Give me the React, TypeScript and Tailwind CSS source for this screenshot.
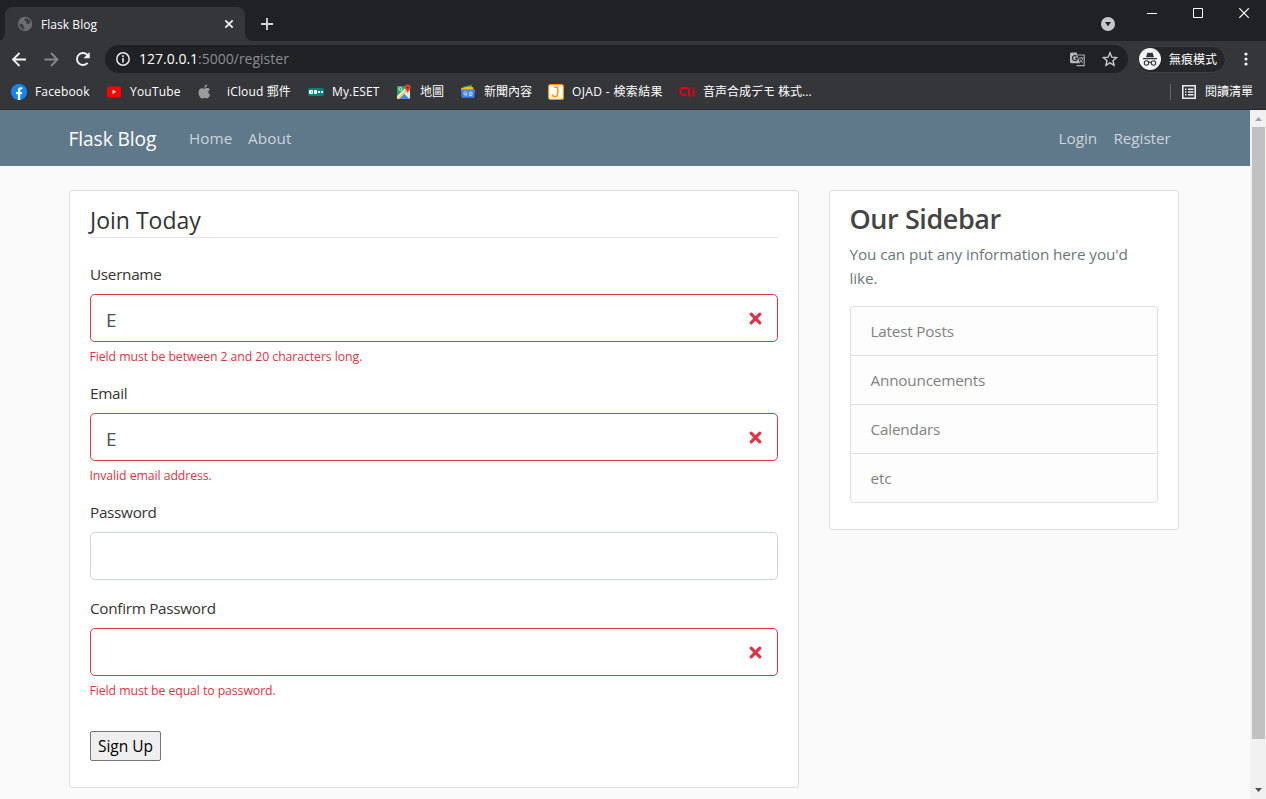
import React from "react";

type Bookmark = { label: string; icon: React.ReactNode; box: string; track: string };

const FacebookIcon = () => (
  <svg width="16" height="16" viewBox="0 0 16 16">
    <circle cx="8" cy="8" r="8" fill="#1087f2" />
    <path d="M6.9 16V10.3H5V8h1.9V6.4c0-2 1.1-3.1 2.9-3.1.8 0 1.5.1 1.5.1v1.9h-.9c-.9 0-1.2.6-1.2 1.1V8h2l-.4 2.3H9.2V16z" fill="#fff" />
  </svg>
);

const YouTubeIcon = () => (
  <svg width="16" height="16" viewBox="0 0 16 16">
    <rect x="0" y="2.5" width="14" height="11" rx="2" fill="#f00" />
    <path d="M5.500 5.700v4.200L9.200 7.800z" fill="#fff" />
  </svg>
);

const AppleIcon = () => (
  <svg width="16" height="16" viewBox="0 0 16 16">
    <path d="M10.200.6c.1 1.700-1.300 3.200-2.800 3.200C7.200 2.200 8.700.8 10.200.6zM7.500 4.800c.6 0 1.500-.8 2.800-.7.9 0 1.900.5 2.500 1.300-2.100 1.300-1.800 4.200.4 5.200-.6 1.900-1.900 3.900-3.200 4-.9 0-1.300-.6-2.400-.6s-1.500.6-2.400.6C3.400 14.600 1.500 11.400 1.500 8.600c0-2.900 1.700-4.400 3.400-4.400 1.200 0 1.900.6 2.600.6z" fill="#9b9b9b" />
  </svg>
);

const EsetIcon = () => (
  <svg width="16" height="16" viewBox="0 0 16 16">
    <rect x="0" y="4" width="16" height="8" rx="2" fill="#00837b" />
    <rect x="1" y="6" width="4" height="4" rx="1" fill="#fff" />
    <rect x="3" y="7.500" width="1" height="1" fill="#00837b" />
    <rect x="6" y="6" width="3" height="4" rx=".8" fill="#fff" />
    <rect x="10" y="7" width="2" height="2" fill="#fff" />
    <rect x="13" y="7" width="2" height="2" fill="#fff" />
  </svg>
);

const MapsIcon = () => (
  <svg width="16" height="16" viewBox="0 0 16 16">
    <rect x="1" y="2" width="13" height="13" rx="1.5" fill="#e8e8e8" />
    <path d="M1 3.500A1.500 1.500 0 0 1 2.500 2H11L1 12z" fill="#1fa463" />
    <path d="M2.500 15 8 9.500 13.500 15z" fill="#4a86f7" />
    <path d="M1 14.500 9.500 6l1.300 1.300L3 15z" fill="#fdd34a" />
    <circle cx="4.3" cy="5" r="1.5" fill="none" stroke="#fff" strokeWidth=".8" />
    <path d="M11.700 9.500C11.400 7 8.700 6 8.700 3.600a3 3 0 0 1 6 0c0 2.400-2.700 3.400-3 5.900z" fill="#ea4335" />
    <circle cx="11.7" cy="3.6" r="1.1" fill="#8c1d18" />
  </svg>
);

const NewsIcon = () => (
  <svg width="16" height="16" viewBox="0 0 16 16">
    <path d="M3.500 2.500 12 .8v4H3.500z" fill="#1fa463" />
    <path d="m8 2.200 6 1.300-.8 4H8z" fill="#ea4335" />
    <path d="m1 4 8.500-1.500 3.500 1V8H2z" fill="#fbbc04" />
    <path d="M1 5.500h14l-.8 8.300H1.800z" fill="#4385f5" />
    <path d="M6.900 8.200a1.700 1.700 0 1 0 .4 1.500H5.700M9 8.200h3.200M9 9.800h3.700M9 11.400h3.200" fill="none" stroke="#dce8ff" strokeWidth=".9" />
  </svg>
);

const OjadIcon = () => (
  <svg width="16" height="16" viewBox="0 0 16 16">
    <rect x=".6" y=".6" width="14.8" height="14.8" rx="2" fill="#fff" stroke="#ff9800" strokeWidth="1.2" />
    <path d="M6 3.200h4.500M9.700 3.200v6.600c0 2-1 2.900-2.700 2.900-1.500 0-2.500-.8-2.700-2.300" fill="none" stroke="#ff9800" strokeWidth="1.6" />
  </svg>
);

const AiIcon = () => (
  <svg width="16" height="16" viewBox="0 0 16 16" fill="none" stroke="#e60012" strokeWidth="2">
    <path d="M7.500 11H4.800C2.700 11 1.300 9.800 1.300 7.500S2.700 3.900 4.800 3.900h2.400c1.800 0 2.800.8 2.800 2.600v3.600c0 1.400.6 2 1.800 2M14.500 6.500v6M14.500 3.300v1.900" />
  </svg>
);

const bookmarks: Bookmark[] = [
  { label: "Facebook", icon: <FacebookIcon />, box: "w-[96px]", track: "tracking-[0.15px]" },
  { label: "YouTube", icon: <YouTubeIcon />, box: "w-[90px]", track: "ml-[-1px] tracking-[0.2px]" },
  { label: "iCloud 郵件", icon: <AppleIcon />, box: "w-[111px]", track: "ml-[6px] tracking-[0.15px]" },
  { label: "My.ESET", icon: <EsetIcon />, box: "w-[88px]", track: "tracking-[0.15px]" },
  { label: "地圖", icon: <MapsIcon />, box: "w-[64px]", track: "" },
  { label: "新聞內容", icon: <NewsIcon />, box: "w-[88px]", track: "" },
  { label: "OJAD - 検索結果", icon: <OjadIcon />, box: "w-[131px]", track: "tracking-[0.36px]" },
  { label: "音声合成デモ 株式...", icon: <AiIcon />, box: "w-[140px]", track: "" },
];

function TabStrip() {
  return (
    <div className="flex h-[41px] bg-[#202124]">
      <svg width="8" height="8" className="-ml-[3px] self-end"><path d="M8 0v8H0a8 8 0 0 0 8-8z" fill="#35363a" /></svg>
      <div className="mt-[7px] flex w-[240px] items-center rounded-t-lg bg-[#35363a] pl-3 pr-[11px]">
        <svg width="16" height="16" viewBox="0 0 16 16">
          <circle cx="8" cy="8" r="7.2" fill="#6b6e72" />
          <path d="M2.200 7.500c1.800.3 3.400.5 4.500 1.700.3 1.300-.3 1.700.7 2.100v2.500A6 6 0 0 1 2.200 7.500zM8.500 2c2.800.3 4.800 2 5.300 4.600-.9 1-2.400.7-2.600 1.700-.8-.3-2.100-.3-2.400-1.700 1.300-.3 1-1.700-.4-1.300C7 5 7.300 3.500 8.500 2z" fill="#3c3e42" />
        </svg>
        <span className="ml-2 pt-px text-[12px] tracking-[0.05px] text-white">Flask Blog</span>
        <svg width="10" height="10" viewBox="0 0 10 10" className="ml-auto"><path d="m1.300 1.300 7.400 7.400m0-7.400L1.300 8.700" stroke="#f1f3f4" strokeWidth="1.7" /></svg>
      </div>
      <svg width="8" height="8" className="self-end"><path d="M0 0v8h8a8 8 0 0 1-8-8z" fill="#35363a" /></svg>
      <svg width="12" height="12" viewBox="0 0 12 12" className="ml-2 mt-[18px]"><path d="M6 0v12M0 6h12" stroke="#d5d7da" strokeWidth="1.8" /></svg>
      <div className="ml-auto flex">
        <svg width="14" height="14" viewBox="0 0 14 14" className="mt-[17px]"><circle cx="7" cy="7" r="7" fill="#c6c8cc" /><path d="M4 5h6l-3 4.200z" fill="#202124" /></svg>
        <svg width="11" height="11" className="ml-8 mt-2"><path d="M0 5.500h10" stroke="#fff" /></svg>
        <svg width="11" height="11" className="ml-[35px] mt-2"><path d="M.5.5h9v9h-9z" fill="none" stroke="#fff" /></svg>
        <svg width="11" height="11" className="ml-[35px] mr-[16px] mt-2"><path d="m.3.300 9.500 9.500m0-9.500-9.500 9.500" stroke="#fff" strokeWidth="1.2" /></svg>
      </div>
    </div>
  );
}

function Toolbar() {
  return (
    <div className="flex h-9 items-center bg-[#35363a] pl-3">
      <svg width="15" height="15" viewBox="0 0 15 15" fill="none" stroke="#f1f3f4" strokeWidth="1.8"><path d="M14 7.500H1.500M7.500 1 1 7.500 7.500 14" /></svg>
      <svg width="15" height="15" viewBox="0 0 15 15" className="ml-[17px]" fill="none" stroke="#85878a" strokeWidth="1.8"><path d="M.5 7.500h12.500M7 1l6.500 6.500L7 14" /></svg>
      <svg width="16" height="16" viewBox="0 0 16 16" className="ml-4"><path d="M12.600 11.800A6 6 0 1 1 12.600 4.200L14 5.800" fill="none" stroke="#f1f3f4" strokeWidth="1.9" /><path d="M14.700 1v6.200H8.500z" fill="#f1f3f4" /></svg>
      <div className="ml-[14px] flex h-7 w-[1023px] items-center rounded-full bg-[#202124] pl-[11px] pr-[10px]">
        <svg width="14" height="14" viewBox="0 0 14 14"><circle cx="7" cy="7" r="6.2" fill="none" stroke="#e8eaed" strokeWidth="1.5" /><path d="M7 6v4.500M7 3.300v1.600" stroke="#e8eaed" strokeWidth="1.6" /></svg>
        <span className="ml-[9px] -mt-px text-[14px] text-white">127.0.0.1<span className="text-[#8b8d91]">:5000/register</span></span>
        <svg width="15" height="15" viewBox="0 0 15 15" className="ml-auto">
          <path d="M8 3h6.200v10.700H6.500" fill="none" stroke="#a5a7aa" strokeWidth="1.2" />
          <path d="M1.500.5h5.200l3.300 10.800H1.500A1.500 1.500 0 0 1 0 9.800V2A1.500 1.500 0 0 1 1.500.5z" fill="#b4b6b9" />
          <path d="M6.700 4.300a2.500 2.500 0 1 0 .8 2H5" fill="none" stroke="#27282b" strokeWidth="1.2" />
          <path d="M9 6h4.500M11.200 5v1M12.800 6c-.3 2-1.500 3.500-3 4.500M9.800 7.500l3 3.500" fill="none" stroke="#a5a7aa" />
        </svg>
        <svg width="16" height="16" viewBox="0 0 16 16" className="ml-[17px]"><path d="m8 1.800 1.800 4.400 4.800.4-3.600 3.100 1.100 4.600L8 11.900l-4.100 2.400L5 9.700 1.400 6.600l4.800-.4z" fill="none" stroke="#c7c9cc" strokeWidth="1.4" /></svg>
      </div>
      <div className="ml-[9px] flex h-[27px] w-[89px] items-center rounded-full border border-[#3e3f42] bg-[#252629] pl-px">
        <svg width="22" height="22" viewBox="0 0 22 22">
          <circle cx="11" cy="11" r="11" fill="#f5f5f6" />
          <path d="M7 9.200 8.500 4.500 11 5.100l2.500-.6L15 9.200z" fill="#323337" />
          <path d="M4 10.700h14M10 14.500c.6-.5 1.400-.5 2 0" stroke="#323337" strokeWidth="1.2" fill="none" />
          <circle cx="7.5" cy="15" r="2.2" fill="none" stroke="#323337" strokeWidth="1.1" /><circle cx="14.5" cy="15" r="2.2" fill="none" stroke="#323337" strokeWidth="1.1" />
        </svg>
        <span className="ml-2 whitespace-nowrap pt-px text-[12px] text-white">無痕模式</span>
      </div>
      <svg width="4" height="14" className="ml-[18px]" fill="#f1f3f4"><circle cx="2" cy="2" r="1.6" /><circle cx="2" cy="7" r="1.6" /><circle cx="2" cy="12" r="1.6" /></svg>
    </div>
  );
}

function BookmarkBar() {
  return (
    <div className="flex h-8 items-center bg-[#35363a] pb-[3px] pl-[11px] text-[12px] text-white">
      {bookmarks.map((b) => (
        <div key={b.label} className={`flex shrink-0 items-center gap-2 whitespace-nowrap ${b.box}`}>
          {b.icon}
          <span className={b.track}>{b.label}</span>
        </div>
      ))}
      <div className="ml-auto flex items-center pr-[13px]">
        <div className="h-4 w-px bg-[#66686b]" />
        <svg width="14" height="14" viewBox="0 0 14 14" className="ml-[11px]" fill="none" stroke="#e8eaed" strokeWidth="1.6"><path d="M.8.8h12.400v12.400H.8z" /><path d="M3 4.200h1.500M6 4.200h5.500M3 7h1.500M6 7h5.500M3 9.800h1.500M6 9.800h5.500" strokeWidth="1.5" /></svg>
        <span className="ml-[9px]">閱讀清單</span>
      </div>
    </div>
  );
}

type FieldProps = { label: string; value?: string; error?: string };

function Field({ label, value, error }: FieldProps) {
  return (
    <div className="mb-4">
      <div className="mb-2 h-6 text-[15.3px] leading-6 tracking-[-0.3px] text-[#333]">{label}</div>
      <div className={`flex h-12 items-center justify-between rounded-[4.8px] border bg-white px-4 ${error ? "border-[#dc3545]" : "border-[#ced4da]"}`}>
        <span className="-ml-px pt-1 text-[19px] text-[#495057]">{value}</span>
        {error && (
          <svg width="13" height="13" viewBox="0 0 13 13" className="-mr-px"><path d="m2.200 2.200 8.600 8.600m0-8.600-8.600 8.600" stroke="#dc3545" strokeWidth="3.2" strokeLinecap="round" /></svg>
        )}
      </div>
      {error && <div className="-ml-[0.5px] mt-1 h-[19.2px] pt-px text-[12.3px] leading-[19.2px] tracking-[-0.09px] text-[#dc3545]">{error}</div>}
    </div>
  );
}

const sidebarLinks = ["Latest Posts", "Announcements", "Calendars", "etc"];

function Page() {
  return (
    <div className="min-w-0 flex-1 bg-[#fafafa]">
      <nav className="flex h-14 items-center bg-[#5f788a] pl-[68.5px] pr-[79.5px] text-[15.3px] text-[#cbd5db]">
        <span className="w-[120.5px] pt-[3px] text-[19.2px] tracking-[-0.1px] text-white">Flask Blog</span>
        <span className="w-[59px]">Home</span>
        <span className="tracking-[0.1px]">About</span>
        <span className="ml-auto w-[55px]">Login</span>
        <span className="w-[57px] tracking-[-0.08px]">Register</span>
      </nav>
      <main className="ml-[69px] mt-6 flex items-start gap-[30px]">
        <section className="h-[598px] w-[730px] rounded-[3px] border border-[#ddd] bg-white px-5 py-[10px]">
          <h2 className="mb-6 h-[37px] border-b border-[#dee2e6] pt-px text-[23px] leading-[37px] text-[#333]">Join Today</h2>
          <Field label="Username" value="E" error="Field must be between 2 and 20 characters long." />
          <Field label="Email" value="E" error="Invalid email address." />
          <Field label="Password" />
          <Field label="Confirm Password" error="Field must be equal to password." />
          <button className="mt-[31px] flex h-[30px] w-[71px] items-center justify-center whitespace-nowrap rounded-[2px] border border-[#767676] bg-[#efefef] pt-[2px] text-[15.5px] text-black">Sign Up</button>
        </section>
        <aside className="h-[340px] w-[350px] rounded-[3px] border border-[#ddd] bg-white px-[19.5px] py-[10px]">
          <h3 className="mb-[6px] pt-px text-[27px] font-semibold leading-[33.6px] tracking-[-0.42px] text-[#444]">Our Sidebar</h3>
          <p className="mb-4 text-[15.3px] leading-6 tracking-[-0.1px] text-[#6c757d]">You can put any information here you'd<br />like.</p>
          <ul className="mx-[0.5px] divide-y divide-[#dfdfdf] rounded-[4px] border border-[#dfdfdf] bg-[#fdfdfd] text-[15.3px] tracking-[-0.2px] text-[#818182]">
            {sidebarLinks.map((l) => (
              <li key={l} className="h-[49px] px-[19.5px] leading-[49px] last:h-12">{l}</li>
            ))}
          </ul>
        </aside>
      </main>
    </div>
  );
}

function Scrollbar() {
  return (
    <div className="flex w-4 flex-col items-center bg-[#f1f1f1] pl-px">
      <svg width="13" height="17" className="shrink-0"><path d="M3 11h7l-3.500-4z" fill="#a3a3a3" /></svg>
      <div className="h-[612px] w-[13px] bg-[#c1c1c1]" />
      <svg width="13" height="17" className="mt-auto shrink-0"><path d="M3 6h7l-3.500 4z" fill="#505050" /></svg>
    </div>
  );
}

export default function App() {
  return (
    <div className="flex h-[799px] w-[1266px] flex-col overflow-hidden font-['Open_Sans','Noto_Sans_CJK_TC',sans-serif]">
      <TabStrip />
      <Toolbar />
      <BookmarkBar />
      <div className="h-px shrink-0 bg-[#28292c]" />
      <div className="flex min-h-0 flex-1">
        <Page />
        <Scrollbar />
      </div>
    </div>
  );
}
